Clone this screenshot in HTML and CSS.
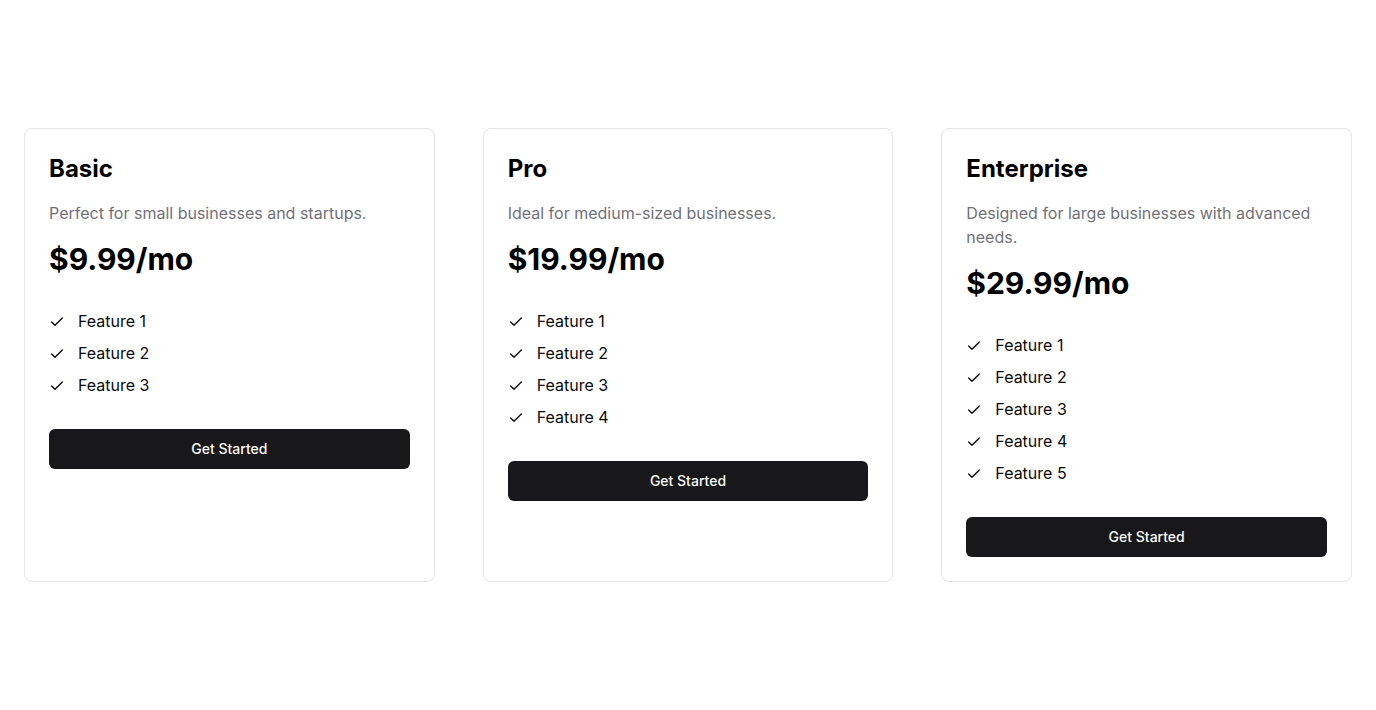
FILE: index.html
```html
<!DOCTYPE html>
<html lang="en">
<head>
<meta charset="utf-8">
<title>Pricing</title>
<link rel="stylesheet" href="styles.css">
</head>
<body>
<main class="page">
  <section class="grid">
    <div class="card">
      <h2 class="title">Basic</h2>
      <p class="desc">Perfect for small businesses and startups.</p>
      <div class="price">$9.99/mo</div>
      <ul class="features">
        <li><svg class="check" viewBox="0 0 24 24"><path d="M20 6 9 17l-5-5"/></svg>Feature 1</li>
        <li><svg class="check" viewBox="0 0 24 24"><path d="M20 6 9 17l-5-5"/></svg>Feature 2</li>
        <li><svg class="check" viewBox="0 0 24 24"><path d="M20 6 9 17l-5-5"/></svg>Feature 3</li>
      </ul>
      <button class="btn">Get Started</button>
    </div>
    <div class="card">
      <h2 class="title">Pro</h2>
      <p class="desc">Ideal for medium-sized businesses.</p>
      <div class="price">$19.99/mo</div>
      <ul class="features">
        <li><svg class="check" viewBox="0 0 24 24"><path d="M20 6 9 17l-5-5"/></svg>Feature 1</li>
        <li><svg class="check" viewBox="0 0 24 24"><path d="M20 6 9 17l-5-5"/></svg>Feature 2</li>
        <li><svg class="check" viewBox="0 0 24 24"><path d="M20 6 9 17l-5-5"/></svg>Feature 3</li>
        <li><svg class="check" viewBox="0 0 24 24"><path d="M20 6 9 17l-5-5"/></svg>Feature 4</li>
      </ul>
      <button class="btn">Get Started</button>
    </div>
    <div class="card">
      <h2 class="title">Enterprise</h2>
      <p class="desc">Designed for large businesses with advanced needs.</p>
      <div class="price">$29.99/mo</div>
      <ul class="features">
        <li><svg class="check" viewBox="0 0 24 24"><path d="M20 6 9 17l-5-5"/></svg>Feature 1</li>
        <li><svg class="check" viewBox="0 0 24 24"><path d="M20 6 9 17l-5-5"/></svg>Feature 2</li>
        <li><svg class="check" viewBox="0 0 24 24"><path d="M20 6 9 17l-5-5"/></svg>Feature 3</li>
        <li><svg class="check" viewBox="0 0 24 24"><path d="M20 6 9 17l-5-5"/></svg>Feature 4</li>
        <li><svg class="check" viewBox="0 0 24 24"><path d="M20 6 9 17l-5-5"/></svg>Feature 5</li>
      </ul>
      <button class="btn">Get Started</button>
    </div>
  </section>
</main>
</body>
</html>
```
FILE: styles.css
```css
* { box-sizing: border-box; }
html, body { margin: 0; padding: 0; }
body {
  font-family: Inter, "Noto Sans", sans-serif;
  color: #09090b;
  background: #fff;
}
.page {
  min-height: 100vh;
  display: flex;
  align-items: center;
  padding: 0 24px;
}
.grid {
  width: 100%;
  display: grid;
  grid-template-columns: repeat(3, 1fr);
  gap: 48px;
  align-items: stretch;
}
.card {
  border: 1px solid #e4e4e7;
  border-radius: 8px;
  padding: 24px;
  display: flex;
  flex-direction: column;
  align-items: stretch;
  background: #fff;
}
.title {
  margin: 0;
  font-size: 24px;
  line-height: 32px;
  font-weight: 700;
  color: #000;
}
.desc {
  margin: 16px 0 0;
  font-size: 16px;
  line-height: 24px;
  color: #71717a;
}
.price {
  margin-top: 16px;
  font-size: 30px;
  line-height: 36px;
  font-weight: 700;
  color: #000;
}
.features {
  list-style: none;
  margin: 32px 0 0;
  padding: 0;
  display: flex;
  flex-direction: column;
  gap: 8px;
}
.features li {
  display: flex;
  align-items: center;
  font-size: 16px;
  line-height: 24px;
  color: #09090b;
}
.check {
  width: 16px;
  height: 16px;
  margin: 2px 13px 0 0;
  fill: none;
  stroke: #09090b;
  stroke-width: 2;
  stroke-linecap: round;
  stroke-linejoin: round;
  flex: none;
}
.btn {
  margin-top: 32px;
  height: 40px;
  width: 100%;
  border: none;
  border-radius: 6px;
  background: #18181b;
  color: #fafafa;
  font-family: Inter, "Noto Sans", sans-serif;
  font-size: 14px;
  font-weight: 500;
  line-height: 20px;
  padding: 0 0 1px;
}
```
